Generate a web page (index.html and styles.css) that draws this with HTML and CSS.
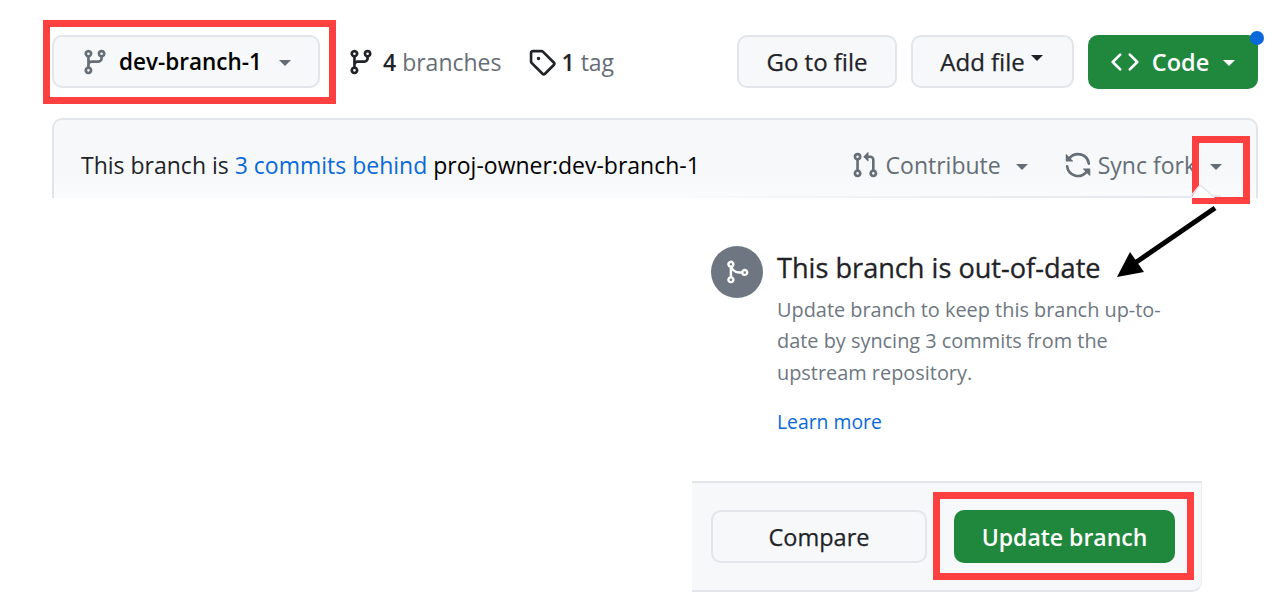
FILE: index.html
```html
<!DOCTYPE html>
<html lang="en">
<head>
<meta charset="utf-8">
<title>Branch out of date</title>
<link rel="stylesheet" href="styles.css">
</head>
<body>
<main class="page">
  <div class="toolbar">
    <button class="btn branch-btn">
      <svg class="icon icon-grey" viewBox="0 0 16 16"><path d="M9.5 3.25a2.25 2.25 0 1 1 3 2.122V6A2.5 2.5 0 0 1 10 8.5H6a1 1 0 0 0-1 1v1.128a2.251 2.251 0 1 1-1.5 0V5.372a2.25 2.25 0 1 1 1.5 0v1.836A2.493 2.493 0 0 1 6 7h4a1 1 0 0 0 1-1v-.628A2.25 2.25 0 0 1 9.5 3.25Zm-6 0a.75.75 0 1 0 1.5 0 .75.75 0 0 0-1.5 0Zm8.25-.75a.75.75 0 1 0 0 1.5.75.75 0 0 0 0-1.5ZM4.25 12a.75.75 0 1 0 0 1.5.75.75 0 0 0 0-1.5Z"/></svg>
      <b class="branch-name">dev-branch-1</b>
      <i class="caret caret-grey"></i>
    </button>
    <a class="meta meta-branches">
      <svg class="icon" viewBox="0 0 16 16"><path d="M9.5 3.25a2.25 2.25 0 1 1 3 2.122V6A2.5 2.5 0 0 1 10 8.5H6a1 1 0 0 0-1 1v1.128a2.251 2.251 0 1 1-1.5 0V5.372a2.25 2.25 0 1 1 1.5 0v1.836A2.493 2.493 0 0 1 6 7h4a1 1 0 0 0 1-1v-.628A2.25 2.25 0 0 1 9.5 3.25Zm-6 0a.75.75 0 1 0 1.5 0 .75.75 0 0 0-1.5 0Zm8.25-.75a.75.75 0 1 0 0 1.5.75.75 0 0 0 0-1.5ZM4.25 12a.75.75 0 1 0 0 1.5.75.75 0 0 0 0-1.5Z"/></svg>
      <span><strong>4</strong> branches</span>
    </a>
    <a class="meta meta-tags">
      <svg class="icon" viewBox="0 0 16 16"><path d="M1 7.775V2.75C1 1.784 1.784 1 2.75 1h5.025c.464 0 .91.184 1.238.513l6.25 6.25a1.75 1.75 0 0 1 0 2.474l-5.026 5.026a1.75 1.75 0 0 1-2.474 0l-6.25-6.25A1.752 1.752 0 0 1 1 7.775Zm1.5 0c0 .066.026.13.073.177l6.25 6.25a.25.25 0 0 0 .354 0l5.025-5.025a.25.25 0 0 0 0-.354l-6.25-6.25a.25.25 0 0 0-.177-.073H2.75a.25.25 0 0 0-.25.25ZM6 5a1 1 0 1 1 0 2 1 1 0 0 1 0-2Z"/></svg>
      <span><strong>1</strong> tag</span>
    </a>
    <div class="toolbar-right">
      <button class="btn file-btn goto">Go to file</button>
      <button class="btn file-btn add">Add file<i class="caret caret-dark"></i></button>
      <button class="btn code-btn">
        <svg class="icon icon-white" viewBox="0 0 16 16"><path d="m11.28 3.22 4.25 4.25a.75.75 0 0 1 0 1.06l-4.25 4.25a.749.749 0 0 1-1.275-.326.749.749 0 0 1 .215-.734L13.94 8l-3.72-3.72a.749.749 0 0 1 .326-1.275.749.749 0 0 1 .734.215Zm-6.56 0a.751.751 0 0 1 1.042.018.751.751 0 0 1 .018 1.042L2.06 8l3.72 3.72a.749.749 0 0 1-.326 1.275.749.749 0 0 1-.734-.215L.47 8.53a.75.75 0 0 1 0-1.06Z"/></svg>
        <span>Code</span>
        <i class="caret caret-white"></i>
        <i class="dot"></i>
      </button>
    </div>
  </div>

  <div class="banner">
    <p class="banner-text">This branch is <a class="link">3 commits behind</a> <span class="black">proj-owner:dev-branch-1</span></p>
    <div class="banner-actions">
      <span class="action">
        <svg class="icon icon-grey" viewBox="0 0 16 16"><path d="M1.5 3.25a2.25 2.25 0 1 1 3 2.122v5.256a2.251 2.251 0 1 1-1.5 0V5.372A2.25 2.25 0 0 1 1.5 3.25Zm5.677-.177L9.573.677A.25.25 0 0 1 10 .854V2.5h1A2.5 2.5 0 0 1 13.5 5v5.628a2.251 2.251 0 1 1-1.5 0V5a1 1 0 0 0-1-1h-1v1.646a.25.25 0 0 1-.427.177L7.177 3.427a.25.25 0 0 1 0-.354ZM3.75 2.5a.75.75 0 1 0 0 1.5.75.75 0 0 0 0-1.5Zm0 9.5a.75.75 0 1 0 0 1.5.75.75 0 0 0 0-1.5Zm8.25.75a.75.75 0 1 0 1.5 0 .75.75 0 0 0-1.5 0Z"/></svg>
        Contribute<i class="caret caret-grey"></i>
      </span>
      <span class="action sync">
        <svg class="icon icon-grey" viewBox="0 0 16 16"><path d="M1.705 8.005a.75.75 0 0 1 .834.656 5.5 5.5 0 0 0 9.592 2.97l-1.204-1.204a.25.25 0 0 1 .177-.427h3.646a.25.25 0 0 1 .25.25v3.646a.25.25 0 0 1-.427.177l-1.38-1.38A7.002 7.002 0 0 1 1.05 8.84a.75.75 0 0 1 .656-.834ZM8 2.5a5.487 5.487 0 0 0-4.131 1.869l1.204 1.204A.25.25 0 0 1 4.896 6H1.25A.25.25 0 0 1 1 5.75V2.104a.25.25 0 0 1 .427-.177l1.38 1.38A7.002 7.002 0 0 1 14.95 7.16a.75.75 0 0 1-1.49.178A5.5 5.5 0 0 0 8 2.5Z"/></svg>
        Sync fork<i class="caret caret-grey sync-caret"></i>
      </span>
    </div>
    <svg class="notch" viewBox="0 0 30 16"><polygon points="0,16 9,3 24,16"/><polyline points="0,14 9,3 22,14 30,14"/></svg>
  </div>

  <section class="popover">
    <div class="pop-body">
      <span class="badge">
        <svg class="badge-icon" viewBox="0 0 16 16"><path d="M5.45 5.154A4.25 4.25 0 0 0 9.25 7.5h1.378a2.251 2.251 0 1 1 0 1.5H9.25A5.734 5.734 0 0 1 5 7.123v3.505a2.25 2.25 0 1 1-1.5 0V5.372a2.25 2.25 0 1 1 1.95-.218ZM4.25 13.5a.75.75 0 1 0 0-1.5.75.75 0 0 0 0 1.5Zm8.5-4.5a.75.75 0 1 0 0-1.5.75.75 0 0 0 0 1.5ZM5 3.25a.75.75 0 1 0 0 .005V3.25Z"/></svg>
      </span>
      <div class="pop-copy">
        <h2 class="pop-title">This branch is out-of-date</h2>
        <p class="pop-desc">Update branch to keep this branch up-to-date by syncing 3 commits from the upstream repository.</p>
        <a class="link learn">Learn more</a>
      </div>
    </div>
    <div class="pop-foot">
      <button class="btn compare">Compare</button>
      <button class="btn update">Update branch</button>
    </div>
  </section>
</main>

<div class="mark mark-branch"></div>
<div class="mark mark-caret"></div>
<div class="mark mark-update"></div>
<svg class="arrow" viewBox="0 0 1280 597"><line x1="1215" y1="208" x2="1135" y2="263"/><polygon points="1117,277 1130,252 1144,272"/></svg>
</body>
</html>
```

FILE: styles.css
```css
* { box-sizing: border-box; }
html, body { margin: 0; padding: 0; }
body {
  width: 1280px;
  height: 597px;
  overflow: hidden;
  position: relative;
  background: #fff;
  color: #1f2328;
  font-family: "Open Sans", "Noto Sans", sans-serif;
  font-size: 23px;
}
.page { padding: 35px 22px 0 52px; }
.icon { width: 28px; height: 28px; fill: #1f2328; flex: none; }
.icon-grey { fill: #656d76; }
.icon-white { fill: #fff; }
.btn {
  font: inherit;
  color: #1f2328;
  background: #f6f8fa;
  border: 2px solid #e2e5e9;
  border-radius: 10px;
  height: 53px;
  display: inline-flex;
  align-items: center;
  justify-content: center;
  padding: 0;
  margin: 0;
}
.caret {
  display: inline-block;
  width: 0;
  height: 0;
  border-left: 6px solid transparent;
  border-right: 6px solid transparent;
  border-top: 6px solid #656d76;
}
.caret-dark { border-top-color: #1f2328; margin: 0 0 7px 6px; }
.caret-white { border-top-color: #fff; margin-left: 14px; margin-top: 3px; }
.caret-grey { margin-top: 3px; }

.toolbar { display: flex; align-items: center; height: 53px; margin-bottom: 30px; }
.branch-btn { width: 268px; padding-left: 27px; justify-content: flex-start; }
.branch-name { font-weight: 600; color: #000; margin-left: 10px; font-size: 22.5px; }
.branch-btn .caret { margin-left: 17px; }
.meta { display: flex; align-items: center; gap: 8px; color: #656d76; }
.meta strong { color: #1f2328; font-weight: 600; }
.meta-branches { margin-left: 27px; }
.meta-tags { margin-left: 26px; gap: 6px; }
.toolbar-right { margin-left: auto; display: flex; gap: 14px; }
.file-btn, .compare { font-size: 24px; font-weight: 500; -webkit-text-stroke: 0.25px #1f2328; }
.goto { width: 160px; }
.add { width: 163px; padding-right: 2px; }
.code-btn {
  position: relative;
  width: 170px;
  height: 54px;
  background: #1f883d;
  border: 0;
  color: #fff;
  font-weight: 600;
  font-size: 23.5px;
}
.code-btn span { margin-left: 13px; }
.dot {
  position: absolute;
  right: -6px;
  top: -4px;
  width: 14px;
  height: 14px;
  border-radius: 50%;
  background: #0969da;
}

.banner {
  position: relative;
  height: 80px;
  border: 2px solid #e2e5e9;
  border-bottom: 0;
  border-radius: 10px 10px 0 0;
  background: linear-gradient(#f6f8fa 70%, #fafbfc);
  display: flex;
  align-items: center;
  justify-content: space-between;
  padding: 12px 34px 0 27px;
}
.banner::after {
  content: "";
  position: absolute;
  left: 640px;
  bottom: 0;
  width: 498px;
  height: 2px;
  background: linear-gradient(90deg, #f6f8fa, #e4e7eb);
}
.banner-text { margin: 0; color: #1f2328; }
.black { color: #000; }
.link { color: #0969da; }
.banner-actions { display: flex; gap: 36px; color: #656d76; }
.action { display: flex; align-items: center; gap: 7px; }
.action .caret { margin-left: 8px; }
.sync { gap: 6px; }
.action .sync-caret { margin-left: 8px; }
.notch { position: absolute; right: 35px; bottom: 0; width: 30px; height: 16px; z-index: 1; }
.notch polygon { fill: #fff; }
.notch polyline { fill: none; stroke: #e2e5e9; stroke-width: 1.5; }

.popover { margin-left: 640px; width: 510px; }
.pop-body { display: flex; padding: 47px 20px 0 19px; height: 283px; }
.badge {
  width: 52px;
  height: 52px;
  margin-top: 1px;
  border-radius: 50%;
  background: #6e7781;
  display: flex;
  align-items: center;
  justify-content: center;
  flex: none;
}
.badge-icon { width: 26px; height: 26px; fill: #fff; }
.pop-copy { margin-left: 14px; }
.pop-title {
  margin: 0 0 3px;
  font-size: 27.15px;
  font-weight: 500;
  line-height: 46px;
  -webkit-text-stroke: 0.3px #1f2328;
}
.pop-desc { margin: 0; color: #6e7781; font-size: 19.9px; line-height: 31.4px; width: 400px; }
.learn { display: block; margin-top: 18px; font-size: 19.35px; line-height: 32px; }
.pop-foot {
  height: 111px;
  background: #f6f8fa;
  border-top: 2px solid #e2e5e9;
  border-bottom: 2px solid #e2e5e9;
  border-right: 1px solid #eceef1;
  border-radius: 0 0 10px 0;
  display: flex;
  align-items: center;
  gap: 27px;
  padding: 0 19px;
}
.compare { width: 216px; font-size: 23.5px; }
.update { width: 221px; background: #1f883d; border: 0; color: #fff; font-weight: 600; }

.mark { position: absolute; border: 7px solid #ff4040; }
.mark-branch { left: 43px; top: 20px; width: 293px; height: 84px; }
.mark-caret { left: 1192px; top: 136px; width: 58px; height: 68px; }
.mark-update { left: 933px; top: 492px; width: 261px; height: 88px; }
.arrow { position: absolute; left: 0; top: 0; width: 1280px; height: 597px; pointer-events: none; }
.arrow line { stroke: #000; stroke-width: 5; }
.arrow polygon { fill: #000; }
```
